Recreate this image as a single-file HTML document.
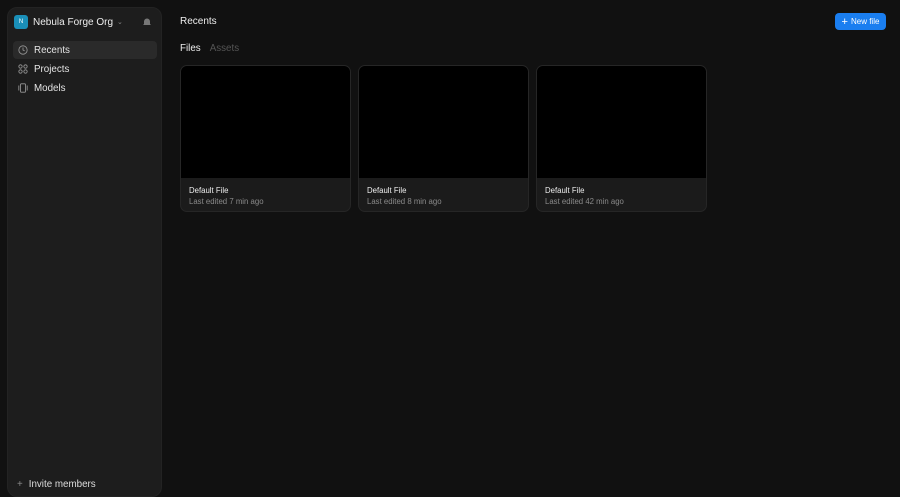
<!DOCTYPE html>
<html><head><meta charset="utf-8"><style>
*{margin:0;padding:0;box-sizing:border-box}
body{width:900px;height:484px;overflow:hidden;background:#111111;font-family:"Liberation Sans",sans-serif;color:#e8e8e8;position:relative}
.sb{position:absolute;left:7px;top:7px;width:155px;height:490px;background:#1d1d1d;border-radius:10px;border:1px solid #232323}
.org{position:absolute;left:6px;top:7px;display:flex;align-items:center;font-size:10px;color:#eee}
.av{width:14px;height:14px;border-radius:3px;background:#1a8fb8;color:#fff;font-size:6px;display:flex;align-items:center;justify-content:center;margin-right:5px}
.item{position:absolute;left:5px;width:144px;height:18px;border-radius:4px;display:flex;align-items:center;font-size:9.8px;color:#e4e4e4;padding-left:5px}
.item svg{margin-right:6px}
.act{background:#2a2a2a}
h1{position:absolute;left:180px;top:16px;font-size:10px;font-weight:normal;color:#eee}
.tabs{position:absolute;left:180px;top:43px;font-size:9.8px}
.btn{position:absolute;left:835px;top:13px;width:51px;height:17px;background:#1a7ef0;border-radius:4px;font-size:8px;color:#fff;display:flex;align-items:center;justify-content:center}
.card{position:absolute;top:65px;width:171px;height:147px;background:#1b1b1b;border:1px solid #262626;border-radius:7px;overflow:hidden}
.card .im{height:112px;background:#000}
.card .t{position:absolute;left:8px;top:120px;font-size:7.8px;color:#eee}
.card .s{position:absolute;left:8px;top:131px;font-size:7.8px;color:#8a8a8a}
</style></head><body>
<div class="sb">
 <div class="org"><div class="av">N</div>Nebula Forge Org <span style="font-size:7px;color:#888;margin-left:4px">⌄</span></div>
 <svg style="position:absolute;left:134px;top:9px" width="10" height="10" viewBox="0 0 10 10"><path d="M2 7V4.5a3 3 0 0 1 6 0V7l1 1H1z M4 9h2" fill="#777"/></svg>
 <div class="item act" style="top:33px"><svg width="10" height="10" viewBox="0 0 12 12" fill="none" stroke="#999"><circle cx="6" cy="6" r="5"/><path d="M6 3v3l2 1"/></svg>Recents</div>
 <div class="item" style="top:52px"><svg width="10" height="10" viewBox="0 0 12 12" fill="none" stroke="#999"><circle cx="3" cy="3" r="2"/><circle cx="9" cy="3" r="2"/><circle cx="3" cy="9" r="2"/><circle cx="9" cy="9" r="2"/></svg>Projects</div>
 <div class="item" style="top:71px"><svg width="10" height="10" viewBox="0 0 12 12" fill="none" stroke="#999"><rect x="3" y="1" width="6" height="10" rx="1"/><path d="M1 3v6M11 3v6"/></svg>Models</div>
 <div style="position:absolute;left:9px;top:471px;font-size:9.8px;color:#ddd"><span style="color:#888;margin-right:6px">+</span>Invite members</div>
</div>
<h1>Recents</h1>
<div class="tabs"><span style="color:#eee">Files</span><span style="color:#555;margin-left:9px">Assets</span></div>
<div class="btn"><span style="font-size:11px;margin-right:3px">+</span>New file</div>
<div class="card" style="left:180px"><div class="im"></div><div class="t">Default File</div><div class="s">Last edited 7 min ago</div></div>
<div class="card" style="left:358px"><div class="im"></div><div class="t">Default File</div><div class="s">Last edited 8 min ago</div></div>
<div class="card" style="left:536px"><div class="im"></div><div class="t">Default File</div><div class="s">Last edited 42 min ago</div></div>
</body></html>
